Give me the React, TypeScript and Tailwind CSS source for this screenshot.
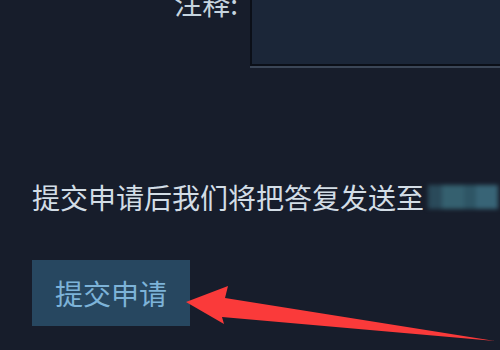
import React from "react";

export default function App() {
  return (
    <div
      className="w-[500px] h-[350px] overflow-hidden bg-[#171d2b] relative"
      style={{ fontFamily: '"Noto Sans CJK SC", "Noto Sans", sans-serif' }}
    >
      <div className="flex flex-col">
        {/* notes row, cut off at top */}
        <div className="flex -mt-[55px]">
          <div className="w-[250px] flex justify-end pr-[12px] pt-[44px]">
            <span className="text-[28px] leading-[28px] text-[#c6d4df]">注释:</span>
          </div>
          <div className="flex-1 flex flex-col">
            <div className="h-[121px] bg-[#1b2638] border-2 border-[#0b0f18] border-r-0" />
            <div className="h-[2px] bg-[#3b4657]" />
          </div>
        </div>

        {/* info line */}
        <div className="flex items-center mt-[115px] pl-[32px]">
          <span className="text-[28px] leading-[28px] text-[#d3dde6] whitespace-nowrap">
            提交申请后我们将把答复发送至
          </span>
          <div className="ml-[4px] flex h-[24px] blur-[2px]">
            <div className="w-[14px] bg-[#2a4a5a]" />
            <div className="w-[22px] bg-[#35606f]" />
            <div className="w-[12px] bg-[#2e5565]" />
            <div className="w-[22px] bg-[#386476]" />
          </div>
        </div>

        {/* button */}
        <div className="pl-[32px] mt-[49px]">
          <button className="w-[158px] h-[66px] bg-[#274760] text-[#7db3d8] text-[28px] leading-[28px] flex items-center justify-center">
            提交申请
          </button>
        </div>
      </div>

      {/* red arrow annotation */}
      <svg className="absolute left-0 top-0 pointer-events-none" width="500" height="350" viewBox="0 0 500 350">
        <polygon
          points="186,302 228,286 225,298 495,341 222,317 224,324"
          fill="#fa3a3a"
        />
      </svg>
    </div>
  );
}
